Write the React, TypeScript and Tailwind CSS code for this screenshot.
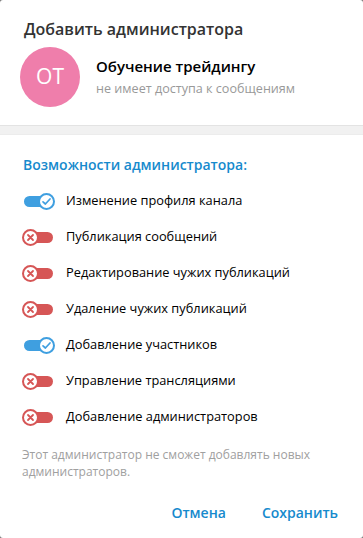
const perms: { label: string; on: boolean }[] = [
  { label: "Изменение профиля канала", on: true },
  { label: "Публикация сообщений", on: false },
  { label: "Редактирование чужих публикаций", on: false },
  { label: "Удаление чужих публикаций", on: false },
  { label: "Добавление участников", on: true },
  { label: "Управление трансляциями", on: false },
  { label: "Добавление администраторов", on: false },
];

function Toggle({ on }: { on: boolean }) {
  if (on) {
    return (
      <div className="relative w-[33px] h-[17px] shrink-0">
        <div className="absolute left-[2px] top-[3px] w-[26px] h-[11px] rounded-full bg-[#3f9fe0]" />
        <div className="absolute right-0 top-0 w-[17px] h-[17px] rounded-full bg-white border-2 border-[#3f9fe0] flex items-center justify-center">
          <svg width="11" height="11" viewBox="0 0 11 11" fill="none">
            <path d="M2 5.8 L4.4 8 L9 3" stroke="#3f9fe0" strokeWidth="1.7" strokeLinecap="round" strokeLinejoin="round" />
          </svg>
        </div>
      </div>
    );
  }
  return (
    <div className="relative w-[33px] h-[17px] shrink-0">
      <div className="absolute right-[2px] top-[3px] w-[26px] h-[11px] rounded-full bg-[#d65656]" />
      <div className="absolute left-0 top-0 w-[17px] h-[17px] rounded-full bg-white border-2 border-[#d65656] flex items-center justify-center">
        <svg width="9" height="9" viewBox="0 0 9 9" fill="none">
          <path d="M2 2 L7 7 M7 2 L2 7" stroke="#d65656" strokeWidth="1.8" strokeLinecap="round" />
        </svg>
      </div>
    </div>
  );
}

export default function App() {
  return (
    <div className="bg-[#777777] w-[363px] h-[538px]" style={{ fontFamily: '"Open Sans", sans-serif' }}>
      <div className="bg-white w-full h-full rounded-[3px] flex flex-col">
        {/* header */}
        <div className="pl-[24px] pt-[17px] text-[16px] leading-[24px] font-semibold text-[#333333]">
          Добавить администратора
        </div>
        <div className="flex items-center pl-[20px] pt-[6px]">
          <div className="w-[60px] h-[60px] rounded-full bg-[#ef7eab] flex items-center justify-center text-white text-[21px]">
            OT
          </div>
          <div className="ml-[16px] flex flex-col">
            <div className="text-[15px] leading-[20px] font-semibold text-black">Обучение трейдингу</div>
            <div className="text-[12.6px] leading-[18px] text-[#999999] mt-[4px]">не имеет доступа к сообщениям</div>
          </div>
        </div>

        {/* separator */}
        <div className="mt-[18px] h-[10px] bg-[#f1f1f1] border-t border-[#e3e3e3] border-b-[#ececec] border-b" />

        {/* permissions */}
        <div className="pl-[23px] pt-[20px] text-[14px] leading-[20px] font-semibold text-[#168acd]">
          Возможности администратора:
        </div>
        <div className="flex flex-col pt-[8px]">
          {perms.map((p) => (
            <div key={p.label} className="flex items-center h-[36px] pl-[22px]">
              <Toggle on={p.on} />
              <div className="ml-[11px] text-[12.8px] text-black">{p.label}</div>
            </div>
          ))}
        </div>

        <div className="px-[22px] pt-[11px] text-[12px] leading-[17px] text-[#a0a0a0]">
          Этот администратор не сможет добавлять новых администраторов.
        </div>

        <div className="flex justify-end gap-[36px] pr-[25px] pt-[22px] text-[14px] font-semibold text-[#168acd]">
          <span>Отмена</span>
          <span>Сохранить</span>
        </div>
      </div>
    </div>
  );
}
